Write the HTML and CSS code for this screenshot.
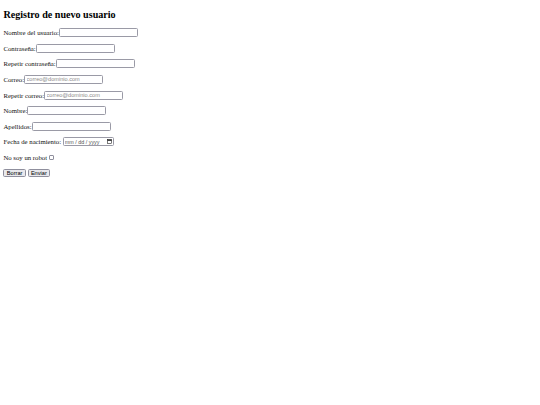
FILE: index.html
```html
<!DOCTYPE html>
<html lang="es">
<head>
<meta charset="utf-8">
<title>Registro</title>
<link rel="stylesheet" href="styles.css">
</head>
<body class="doc">
<h2 class="title">Registro de nuevo usuario</h2>
<form class="form">
<p class="row"><label>Nombre del usuario:<input type="text" class="field"></label></p>
<p class="row"><label>Contraseña:<input type="password" class="field"></label></p>
<p class="row"><label>Repetir contraseña:<input type="password" class="field"></label></p>
<p class="row"><label>Correo:<input type="email" class="field" placeholder="correo@dominio.com"></label></p>
<p class="row"><label>Repetir correo:<input type="email" class="field" placeholder="correo@dominio.com"></label></p>
<p class="row"><label>Nombre:<input type="text" class="field"></label></p>
<p class="row"><label>Apellidos:<input type="text" class="field"></label></p>
<p class="row"><label>Fecha de nacimiento:<span class="field date"><input type="text" class="date-text" placeholder="mm / dd / yyyy"><svg class="cal" viewBox="0 0 10 10" width="5" height="5"><rect x="0.75" y="1.25" width="8.5" height="8" fill="none" stroke="#222" stroke-width="1.2"/><rect x="0.75" y="1.25" width="8.5" height="2.4" fill="#222"/></svg></span></label></p>
<p class="row"><label>No soy un robot <input type="checkbox" class="check"></label></p>
<p class="row"><input type="reset" class="btn" value="Borrar"> <input type="submit" class="btn" value="Enviar"></p>
</form>
</body>
</html>
```
FILE: styles.css
```css
html {
  background: #ffffff;
}
.doc {
  margin: 0;
  padding: 0 3.4px;
  font-family: "Liberation Serif", "Times New Roman", serif;
  font-size: 6.75px;
  color: #111111;
}
.title {
  margin: 8.5px 0 0;
  font-size: 10.1px;
  line-height: 12px;
  font-weight: bold;
  color: #000;
}
.form {
  display: flex;
  flex-direction: column;
  gap: 6.65px;
  margin-top: 7.5px;
}
.row {
  margin: 0;
  height: 9px;
  line-height: 9px;
  white-space: nowrap;
}
.field {
  box-sizing: border-box;
  display: inline-block;
  vertical-align: top;
  width: 79px;
  height: 9px;
  margin: 0;
  padding: 0 1.5px;
  border: 0.6px solid #9a9aa6;
  border-radius: 1.4px;
  background: #ffffff;
  font-family: "Liberation Sans", Arial, sans-serif;
  font-size: 5.6px;
  color: #000;
  outline: none;
}
.field::placeholder {
  color: #8a8a8a;
}
.date {
  width: 51.5px;
  margin-left: 1.6px;
  display: inline-flex;
  align-items: center;
  justify-content: space-between;
  padding: 0 2px 0 1px;
}
.date-text {
  border: none;
  padding: 0;
  margin: 0;
  width: 42px;
  height: 7px;
  background: transparent;
  font-family: "Liberation Sans", Arial, sans-serif;
  font-size: 5.4px;
  outline: none;
}
.date-text::placeholder {
  color: #555555;
}
.cal {
  display: block;
  flex: none;
}
.check {
  appearance: none;
  -webkit-appearance: none;
  box-sizing: border-box;
  display: inline-block;
  vertical-align: top;
  width: 5.6px;
  height: 5.6px;
  margin: 1.6px 0 0;
  border: 0.6px solid #8f8f9d;
  border-radius: 1px;
  background: #fff;
}
.btn {
  appearance: none;
  -webkit-appearance: none;
  box-sizing: border-box;
  vertical-align: top;
  width: 22.5px;
  height: 8px;
  margin: 0;
  padding: 0;
  border: 0.6px solid #8f8f9d;
  border-radius: 1.6px;
  background: #e9e9ed;
  font-family: "Liberation Sans", Arial, sans-serif;
  font-size: 5.6px;
  line-height: 7px;
  color: #000;
}
```
